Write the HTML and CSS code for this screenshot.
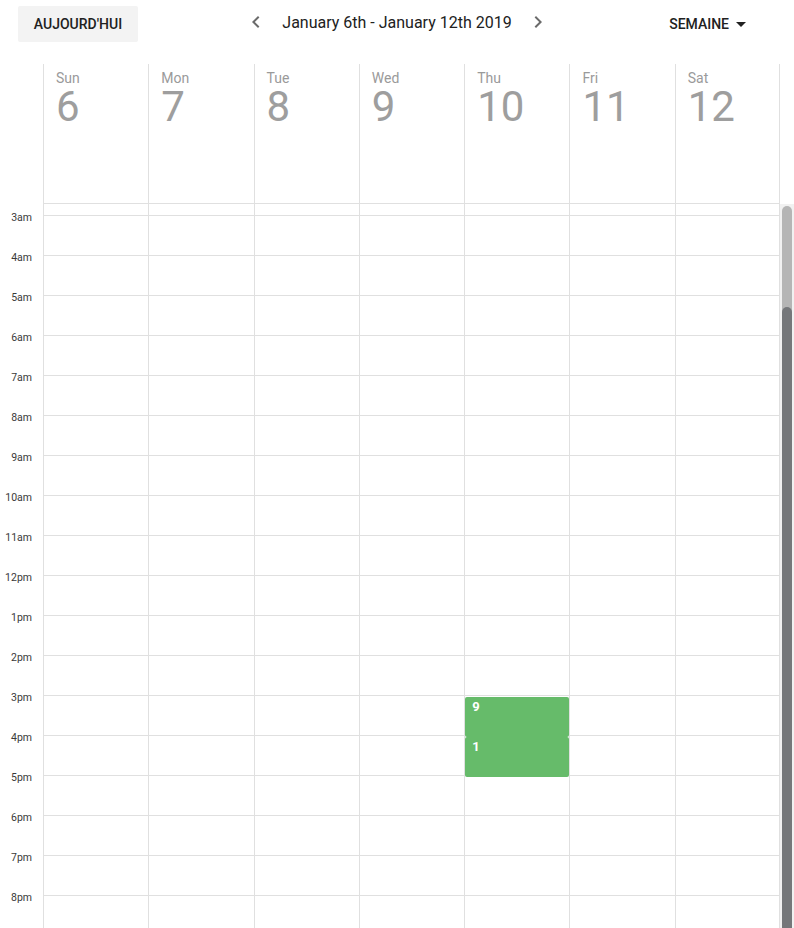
FILE: index.html
```html
<!DOCTYPE html>
<html lang="fr">
<head>
<meta charset="utf-8">
<title>Calendrier</title>
<link rel="stylesheet" href="styles.css">
</head>
<body>
<div class="app">
  <div class="toolbar">
    <div class="tb-left"><button class="btn-today">AUJOURD'HUI</button></div>
    <div class="tb-center">
      <button class="nav-btn" aria-label="précédent"><svg viewBox="0 0 24 24" width="24" height="24"><path d="M15.41 7.41L14 6l-6 6 6 6 1.41-1.41L10.83 12z"/></svg></button>
      <span class="range">January 6th - January 12th 2019</span>
      <button class="nav-btn" aria-label="suivant"><svg viewBox="0 0 24 24" width="24" height="24"><path d="M10 6L8.59 7.41 13.17 12l-4.58 4.59L10 18l6-6z"/></svg></button>
    </div>
    <div class="tb-right"><button class="btn-view">SEMAINE<span class="caret"></span></button></div>
  </div>

  <div class="head">
    <div class="gutter-head"></div>
    <div class="day-head"><span class="dname">Sun</span><span class="dnum">6</span></div>
    <div class="day-head"><span class="dname">Mon</span><span class="dnum">7</span></div>
    <div class="day-head"><span class="dname">Tue</span><span class="dnum">8</span></div>
    <div class="day-head"><span class="dname">Wed</span><span class="dnum">9</span></div>
    <div class="day-head"><span class="dname">Thu</span><span class="dnum">10</span></div>
    <div class="day-head"><span class="dname">Fri</span><span class="dnum">11</span></div>
    <div class="day-head last"><span class="dname">Sat</span><span class="dnum">12</span></div>
  </div>

  <div class="body">
    <div class="grid">
      <div class="gutter">
        <div class="hl">3am</div><div class="hl">4am</div><div class="hl">5am</div><div class="hl">6am</div>
        <div class="hl">7am</div><div class="hl">8am</div><div class="hl">9am</div><div class="hl">10am</div>
        <div class="hl">11am</div><div class="hl">12pm</div><div class="hl">1pm</div><div class="hl">2pm</div>
        <div class="hl">3pm</div><div class="hl">4pm</div><div class="hl">5pm</div><div class="hl">6pm</div>
        <div class="hl">7pm</div><div class="hl">8pm</div>
      </div>
      <div class="day"><div class="pre"></div><div class="slot"></div><div class="slot"></div><div class="slot"></div><div class="slot"></div><div class="slot"></div><div class="slot"></div><div class="slot"></div><div class="slot"></div><div class="slot"></div><div class="slot"></div><div class="slot"></div><div class="slot"></div><div class="slot"></div><div class="slot"></div><div class="slot"></div><div class="slot"></div><div class="slot"></div><div class="slot"></div><div class="slot"></div></div>
      <div class="day"><div class="pre"></div><div class="slot"></div><div class="slot"></div><div class="slot"></div><div class="slot"></div><div class="slot"></div><div class="slot"></div><div class="slot"></div><div class="slot"></div><div class="slot"></div><div class="slot"></div><div class="slot"></div><div class="slot"></div><div class="slot"></div><div class="slot"></div><div class="slot"></div><div class="slot"></div><div class="slot"></div><div class="slot"></div><div class="slot"></div></div>
      <div class="day"><div class="pre"></div><div class="slot"></div><div class="slot"></div><div class="slot"></div><div class="slot"></div><div class="slot"></div><div class="slot"></div><div class="slot"></div><div class="slot"></div><div class="slot"></div><div class="slot"></div><div class="slot"></div><div class="slot"></div><div class="slot"></div><div class="slot"></div><div class="slot"></div><div class="slot"></div><div class="slot"></div><div class="slot"></div><div class="slot"></div></div>
      <div class="day"><div class="pre"></div><div class="slot"></div><div class="slot"></div><div class="slot"></div><div class="slot"></div><div class="slot"></div><div class="slot"></div><div class="slot"></div><div class="slot"></div><div class="slot"></div><div class="slot"></div><div class="slot"></div><div class="slot"></div><div class="slot"></div><div class="slot"></div><div class="slot"></div><div class="slot"></div><div class="slot"></div><div class="slot"></div><div class="slot"></div></div>
      <div class="day"><div class="pre"></div><div class="slot"></div><div class="slot"></div><div class="slot"></div><div class="slot"></div><div class="slot"></div><div class="slot"></div><div class="slot"></div><div class="slot"></div><div class="slot"></div><div class="slot"></div><div class="slot"></div><div class="slot"></div><div class="slot"></div><div class="slot"></div><div class="slot"></div><div class="slot"></div><div class="slot"></div><div class="slot"></div><div class="slot"></div>
        <div class="event" style="top:493px;height:40px">9</div>
        <div class="event" style="top:533px;height:40px">1</div>
      </div>
      <div class="day"><div class="pre"></div><div class="slot"></div><div class="slot"></div><div class="slot"></div><div class="slot"></div><div class="slot"></div><div class="slot"></div><div class="slot"></div><div class="slot"></div><div class="slot"></div><div class="slot"></div><div class="slot"></div><div class="slot"></div><div class="slot"></div><div class="slot"></div><div class="slot"></div><div class="slot"></div><div class="slot"></div><div class="slot"></div><div class="slot"></div></div>
      <div class="day last"><div class="pre"></div><div class="slot"></div><div class="slot"></div><div class="slot"></div><div class="slot"></div><div class="slot"></div><div class="slot"></div><div class="slot"></div><div class="slot"></div><div class="slot"></div><div class="slot"></div><div class="slot"></div><div class="slot"></div><div class="slot"></div><div class="slot"></div><div class="slot"></div><div class="slot"></div><div class="slot"></div><div class="slot"></div><div class="slot"></div></div>
    </div>
    <div class="scrollbar">
      <div class="track-light"><div class="thumb"></div></div>
    </div>
  </div>
</div>
</body>
</html>
```

FILE: styles.css
```css
* { box-sizing: border-box; }
html, body { margin: 0; padding: 0; background: #fff; }
body {
  font-family: Roboto, "Liberation Sans", Arial, sans-serif;
  color: rgba(0, 0, 0, 0.87);
  width: 794px;
  height: 928px;
  overflow: hidden;
}
.app { display: flex; flex-direction: column; height: 928px; }

/* toolbar */
.toolbar {
  height: 64px;
  padding-top: 6px;
  display: grid;
  grid-template-columns: 1fr auto 1fr;
  align-items: start;
}
.tb-left { padding-left: 18px; }
button {
  font-family: inherit;
  border: 0;
  background: none;
  cursor: pointer;
  color: inherit;
  padding: 0;
}
.btn-today {
  height: 36px;
  width: 120px;
  background: #f3f3f3;
  border-radius: 2px;
  font-size: 14px;
  font-weight: 500;
  color: #212121;
}
.tb-center {
  height: 36px;
  display: flex;
  align-items: center;
  gap: 14px;
  margin-top: -2px;
}
.nav-btn { width: 24px; height: 24px; display: flex; }
.nav-btn svg { fill: #6b6b6b; }
.range { font-size: 16px; color: #212121; }
.tb-right { display: flex; justify-content: flex-end; padding-right: 32px; }
.btn-view {
  height: 36px;
  padding: 0 16px;
  display: flex;
  align-items: center;
  font-size: 14px;
  font-weight: 500;
  color: #212121;
}
.caret {
  margin-left: 7px;
  width: 0;
  height: 0;
  border-left: 5px solid transparent;
  border-right: 5px solid transparent;
  border-top: 5px solid #212121;
}

/* header */
.head {
  display: grid;
  grid-template-columns: 43px repeat(7, 1fr);
  width: 780px;
  height: 140px;
}
.day-head {
  border-left: 1px solid #e0e0e0;
  border-bottom: 1px solid #e0e0e0;
  padding: 6px 0 0 12px;
  display: flex;
  flex-direction: column;
}
.day-head.last { border-right: 1px solid #e0e0e0; }
.dname { font-size: 14px; line-height: 16px; color: #9a9a9a; }
.dnum { font-size: 42px; line-height: 42px; color: #9e9e9e; }

/* body */
.body {
  flex: 1;
  display: flex;
  overflow: hidden;
}
.grid {
  width: 780px;
  display: grid;
  grid-template-columns: 43px repeat(7, 1fr);
  align-items: start;
}
.gutter { padding-top: 8px; }
.hl {
  height: 40px;
  line-height: 12px;
  font-size: 10.5px;
  text-align: right;
  padding-right: 11px;
  color: #3a3a3a;
}
.day {
  position: relative;
  border-left: 1px solid #e0e0e0;
}
.day.last { border-right: 1px solid #e0e0e0; }
.pre { height: 11px; }
.slot { height: 40px; border-top: 1px solid #e0e0e0; }
.event {
  position: absolute;
  left: 0;
  right: 0;
  z-index: 1;
  background: #66bb6a;
  border-radius: 2px;
  color: #fff;
  font-size: 13px;
  font-weight: 700;
  line-height: 16px;
  padding: 2px 7px;
}

/* scrollbar */
.scrollbar {
  width: 14px;
  background: #f1f1f1;
  padding: 2px 2px 0 2px;
  display: flex;
}
.track-light {
  flex: 1;
  background: #b5b5b5;
  border-radius: 5px 5px 0 0;
  display: flex;
  flex-direction: column;
}
.thumb {
  margin-top: 101px;
  flex: 1;
  background: #75777a;
  border-radius: 5px 5px 0 0;
}
```
